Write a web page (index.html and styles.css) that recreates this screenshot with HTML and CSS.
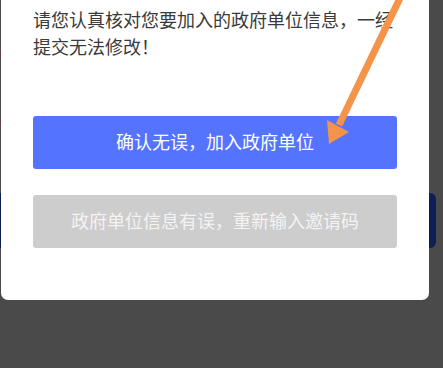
FILE: index.html
```html
<!DOCTYPE html>
<html lang="zh-CN">
<head>
<meta charset="utf-8">
<link rel="stylesheet" href="styles.css">
</head>
<body>
<div class="screen">
  <div class="under-bar"></div>
  <span class="speck speck-a"></span>
  <span class="speck speck-b"></span>
  <div class="modal">
    <p class="msg">请您认真核对您要加入的政府单位信息，一经提交无法修改！</p>
    <div class="actions">
      <button class="btn btn-primary">确认无误，加入政府单位</button>
      <button class="btn btn-muted">政府单位信息有误，重新输入邀请码</button>
    </div>
  </div>
  <svg class="arrow" width="443" height="368" viewBox="0 0 443 368">
    <line x1="401" y1="-4" x2="339" y2="125" stroke="#f4944a" stroke-width="7"/>
    <polygon points="327,120 349,132 329,144" fill="#f4944a"/>
  </svg>
</div>
</body>
</html>
```
FILE: styles.css
```css
html, body {
  margin: 0;
  padding: 0;
  background: #4a4a4a;
  overflow: hidden;
}
.screen {
  position: relative;
  width: 443px;
  height: 368px;
  overflow: hidden;
  font-family: "Noto Sans CJK SC", "Noto Sans", sans-serif;
}
.under-bar {
  position: absolute;
  left: -20px;
  top: 193px;
  width: 456px;
  height: 55px;
  border-radius: 6px;
  background: #0e1f55;
}
.speck {
  position: absolute;
  left: 0;
  width: 1px;
  height: 3px;
  background: #7a3a3a;
}
.speck-a { top: 52px; }
.speck-b { top: 121px; }
.modal {
  position: relative;
  margin-left: 1px;
  width: 428px;
  box-sizing: border-box;
  padding: 6px 32px 52px 32px;
  background: #ffffff;
  border-radius: 0 0 7px 7px;
}
.msg {
  margin: 0;
  font-size: 18px;
  line-height: 27px;
  color: #3a3a3a;
}
.actions {
  margin-top: 56px;
  display: flex;
  flex-direction: column;
  gap: 26px;
}
.btn {
  display: block;
  width: 100%;
  height: 53px;
  border: none;
  border-radius: 3px;
  font-family: "Noto Sans CJK SC", "Noto Sans", sans-serif;
  font-size: 18px;
  line-height: 50px;
  padding: 0 0 3px 0;
  margin: 0;
}
.btn-primary {
  background: #5473ff;
  color: #ffffff;
}
.btn-muted {
  background: #cdcdcd;
  color: #f3f3f3;
}
.arrow {
  position: absolute;
  left: 0;
  top: 0;
  pointer-events: none;
}
```
